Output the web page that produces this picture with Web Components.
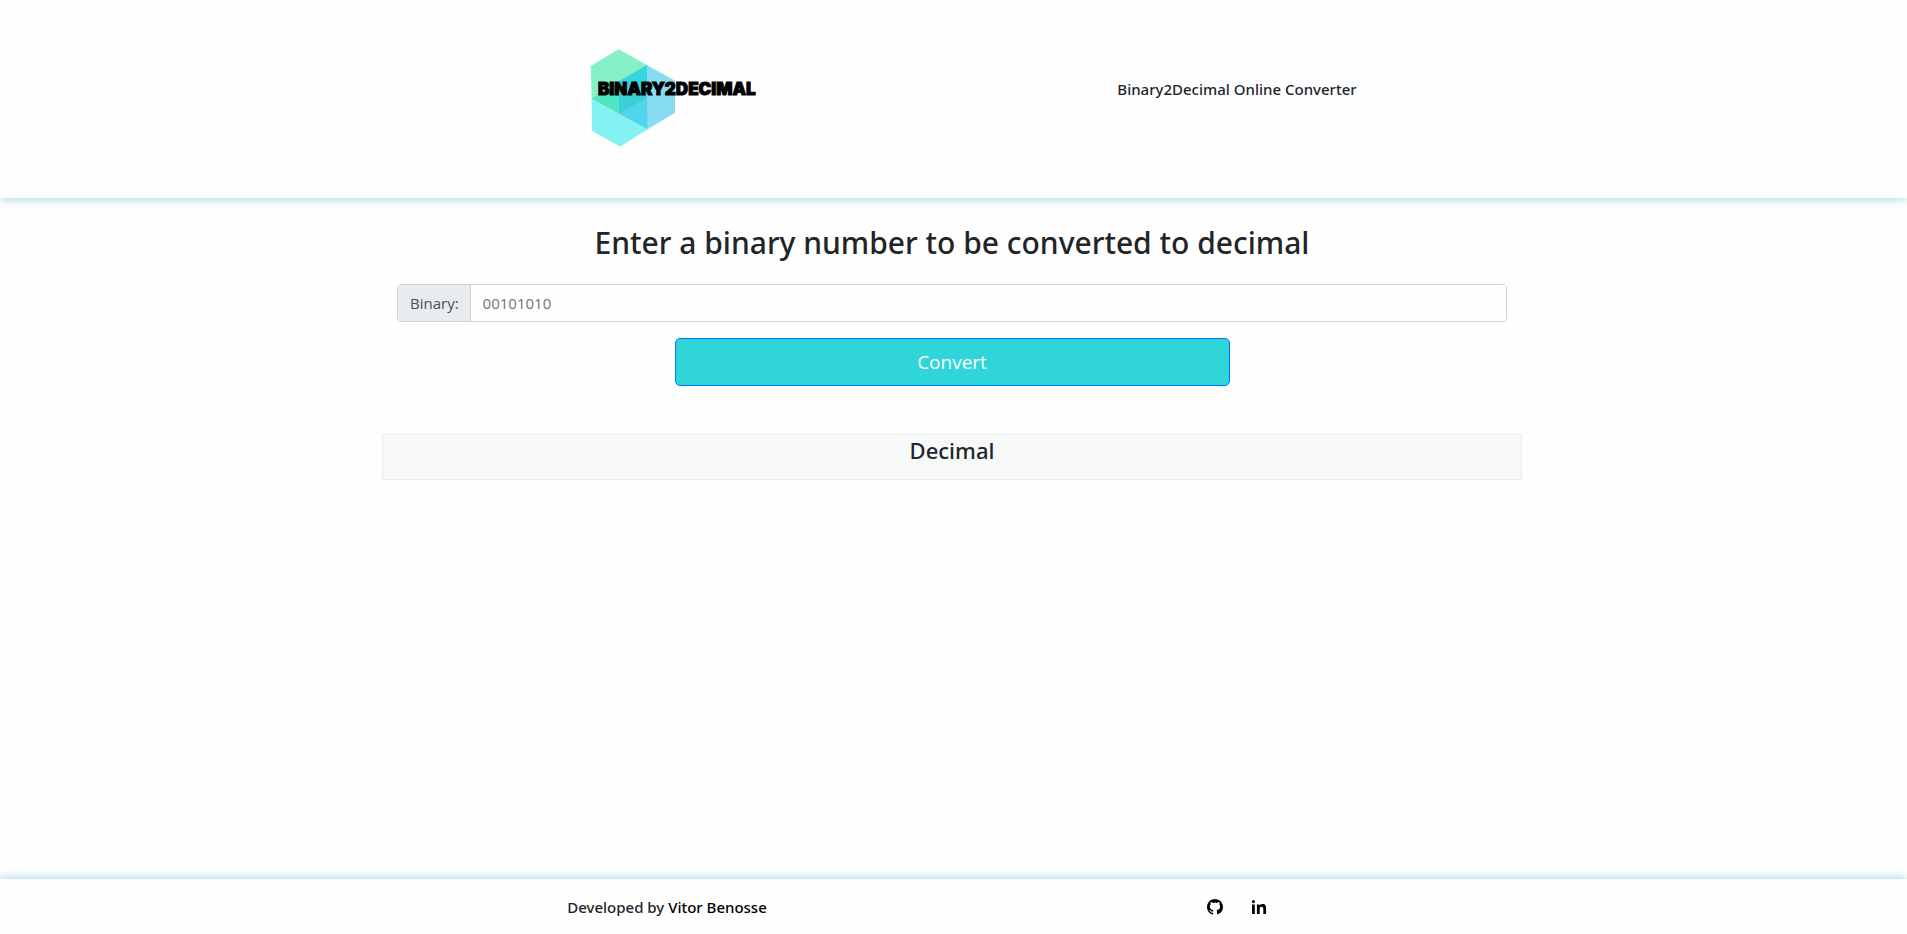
<!DOCTYPE html>
<html lang="en">
<head>
<meta charset="utf-8">
<meta name="viewport" content="width=device-width, initial-scale=1">
<title>Binary2Decimal</title>
<style>
  body { margin: 0; background: #fefefe; color: #212529; font: 400 15px/24px "Open Sans", sans-serif; }
</style>
</head>
<body>
<b2d-app></b2d-app>
<script>
const define = (name, html, setup) => {
  const template = document.createElement('template');
  template.innerHTML = html;
  customElements.define(name, class extends HTMLElement {
    constructor() {
      super();
      this.attachShadow({ mode: 'open' }).append(template.content.cloneNode(true));
    }
    connectedCallback() {
      if (setup) setup(this.shadowRoot, this);
    }
  });
};

define('b2d-logo', `
<style>
  :host { display: block; }
  svg { display: block; }
  text { font: 900 17px Inter, sans-serif; fill: #000; stroke: #000; stroke-width: 1px; }
</style>
<svg width="200" height="120" viewBox="0 0 200 120" role="img" aria-label="Binary2Decimal">
  <g transform="translate(3 -9) scale(.33333)">
    <path fill="#86f0c6" d="M62 108 146 58 231 105V202L147 251 65 206Z"/>
    <path fill="#88dcf2" d="M231 105 315 152V248L233 298 147 251V153Z"/>
    <path fill="#84f2f3" d="M65 206 147 251 233 298 150 350 66 302Z"/>
    <path fill="#50e6c4" d="M65 206 147 160V251Z"/>
    <path fill="#35d5dc" d="M147 153 231 105V205L147 251Z"/>
    <path fill="#3bcfd8" d="M147 160 231 205 147 251Z"/>
    <path fill="#50d6ea" d="M147 251 231 205 233 298Z"/>
  </g>
  <text x="31" y="56">BINARY2DECIMAL</text>
</svg>`);

define('b2d-header', `
<style>
  :host { display: block; box-shadow: 0 2px 8px #b4dfe2; }
  header { max-width: 1140px; min-height: 198px; margin: 0 auto; padding-right: 3px; display: grid; grid-template-columns: 1fr 1fr; align-items: center; justify-items: center; }
  .title { font-family: "Noto Sans", sans-serif; font-weight: 500; padding-bottom: 20px; }
</style>
<header><b2d-logo></b2d-logo><div class="title"><slot></slot></div></header>`);

define('b2d-converter', `
<style>
  :host { display: block; }
  * { box-sizing: border-box; }
  form { padding: 0 15px; }
  h2, h4 { font-family: "Noto Sans", sans-serif; font-weight: 500; }
  h2 { margin: 0 0 22px; font-size: 30px; line-height: 38px; text-align: center; }
  .group { display: flex; height: 38px; margin-bottom: 16px; border: 1px solid #ced4da; border-radius: 4px; overflow: hidden; }
  label { padding: 6px 11px 6px 12px; background: #e9ecef; border-right: 1px solid #ced4da; color: #495057; }
  input { flex: 1; min-width: 0; border: 0; padding: 6px 12px; font: inherit; color: #495057; background: #fefefe; }
  input::placeholder { color: #6c757d; opacity: 1; }
  button { display: block; width: 50%; height: 48px; margin: 0 auto; padding: 0; border: 1px solid #007bff; border-radius: 5px; background: #30d5da; color: #fff; font: inherit; font-size: 19px; cursor: pointer; }
  section { margin-top: 48px; min-height: 46px; border: 1px solid #e9ecec; background: #f6f9f8; text-align: center; }
  h4 { margin: 0; font-size: 22px; line-height: 30px; }
  output:empty { display: none; }
  output { display: block; padding-bottom: 12px; }
</style>
<form>
  <h2>Enter a binary number to be converted to decimal</h2>
  <div class="group"><label for="binary">Binary:</label><input id="binary" type="text" placeholder="00101010" autocomplete="off"></div>
  <button type="submit">Convert</button>
</form>
<section><h4>Decimal</h4><output></output></section>`, root => {
  root.querySelector('form').addEventListener('submit', event => {
    event.preventDefault();
    const value = root.querySelector('input').value.trim();
    root.querySelector('output').textContent = /^[01]+$/.test(value) ? BigInt('0b' + value).toString() : '';
  });
});

const icons = {
  GitHub: 'M8 0C3.58 0 0 3.58 0 8c0 3.54 2.29 6.53 5.47 7.59.4.07.55-.17.55-.38v-1.49C4 14.1 3.48 13 3.32 12.55c-.09-.23-.48-.94-.82-1.13-.28-.15-.68-.52-.01-.53.63-.01 1.08.58 1.23.82.72 1.21 1.87.87 2.33.66.07-.52.28-.87.51-1.07-1.78-.2-3.64-.89-3.64-3.95 0-.87.31-1.59.82-2.15-.08-.2-.36-1.02.08-2.12 0 0 .67-.21 2.2.82a7.5 7.5 0 0 1 4 0c1.53-1.04 2.2-.82 2.2-.82.44 1.1.16 1.92.08 2.12.51.56.82 1.27.82 2.15 0 3.07-1.87 3.75-3.65 3.95.29.25.54.73.54 1.48v2.2c0 .21.15.46.55.38A8.01 8.01 0 0 0 16 8c0-4.42-3.58-8-8-8Z',
  LinkedIn: 'M1 5.4h2.8V15H1zM2.4 1a1.6 1.6 0 1 1 0 3.2 1.6 1.6 0 0 1 0-3.2ZM5.9 5.4h2.7v1.3c.4-.8 1.4-1.6 2.9-1.6 3 0 3.6 2 3.6 4.6V15h-2.8v-4.7c0-1.1 0-2.6-1.7-2.6S8.7 9 8.7 10.2V15H5.9z'
};

define('b2d-social', `
<style>
  :host { display: block; }
  a { display: block; color: #000; }
  svg { display: block; width: 16px; height: 16px; fill: currentColor; }
</style>
<a href="#"><svg viewBox="0 0 16 16" aria-hidden="true"><path/></svg></a>`, (root, host) => {
  const name = host.getAttribute('network');
  root.querySelector('a').setAttribute('aria-label', name);
  root.querySelector('path').setAttribute('d', icons[name]);
});

define('b2d-footer', `
<style>
  :host { display: block; box-shadow: 0 -2px 8px #b4dfe2; }
  footer { max-width: 1140px; min-height: 55px; margin: 0 auto; padding-right: 3px; display: grid; grid-template-columns: 1fr 1fr; align-items: center; justify-items: center; font-family: "Noto Sans", sans-serif; font-weight: 500; }
  a { color: #000; text-decoration: none; }
  nav { display: flex; gap: 28px; }
</style>
<footer>
  <div>Developed by <a href="#">Vitor Benosse</a></div>
  <nav><slot></slot></nav>
</footer>`);

define('b2d-app', `
<style>
  :host { display: flex; flex-direction: column; min-height: 100vh; }
  main { flex: 1; width: 100%; max-width: 1140px; margin: 0 auto; padding: 26px 3px 0 0; }
</style>
<b2d-header>Binary2Decimal Online Converter</b2d-header>
<main><b2d-converter></b2d-converter></main>
<b2d-footer><b2d-social network="GitHub"></b2d-social><b2d-social network="LinkedIn"></b2d-social></b2d-footer>`);
</script>
</body>
</html>
